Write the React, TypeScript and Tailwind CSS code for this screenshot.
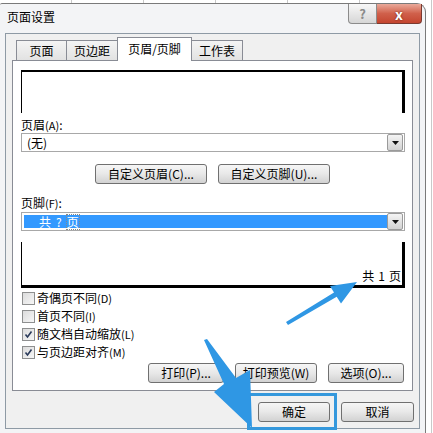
import React from 'react';

const font = "font-['Noto_Sans_CJK_SC',sans-serif]";
const btn =
  'flex items-center justify-center h-[20px] rounded-[3px] border border-[#707070] bg-linear-to-b from-[#f6f6f6] via-[#e8e8e8] to-[#d2d2d2] text-[12px] leading-[14px] text-black';

const Arrow: React.FC = () => (
  <svg width="7" height="4" viewBox="0 0 7 4">
    <path d="M0 0h7L3.5 4z" fill="#111" />
  </svg>
);

const Combo: React.FC<{ children: React.ReactNode }> = ({ children }) => (
  <div className="ml-[8px] flex h-[19px] w-[384px] items-center border border-[#a8a8a8] bg-white pr-px">
    <div className="flex h-full flex-1 items-center pl-[2px]">{children}</div>
    <div className="flex h-[17px] w-[16px] items-center justify-center rounded-[2px] border border-[#9a9a9a] bg-linear-to-b from-[#f4f4f4] to-[#d2d2d2]">
      <Arrow />
    </div>
  </div>
);

const Check: React.FC<{ checked?: boolean; label: string; k: string }> = ({ checked, label, k }) => (
  <div className="ml-[9px] flex h-[18px] items-center gap-[2px]">
    <div className="flex h-[13px] w-[13px] items-center justify-center border border-[#8e8f8f] bg-linear-to-br from-[#dcdcdc] to-[#f6f6f6]">
      {checked && (
        <svg width="9" height="9" viewBox="0 0 9 9">
          <path d="M1.5 4.5l2 2.5 4-5.5" stroke="#2a3a5a" strokeWidth="1.6" fill="none" />
        </svg>
      )}
    </div>
    <span className="text-[12px] leading-[14px] text-black">
      {label}
      <span className="text-[11px]">({k})</span>
    </span>
  </div>
);

export default function App() {
  return (
    <div
      className={`relative h-[433px] w-[433px] overflow-hidden bg-[#e4e4e4] bg-[repeating-linear-gradient(90deg,#ffffff_0_71px,#c9c9c9_71px_72px)] ${font}`}
    >
      {/* dialog */}
      <div className="mt-[3px] h-[440px] w-[426px] rounded-tr-[9px] rounded-tl-[2px] border-t border-r border-[#7a7a7a] bg-[#f3f4f6]">
        {/* title bar */}
        <div className="flex h-[29px] items-start">
          <div className="ml-[7px] mt-[6px] text-[12px] leading-[14px] text-black">页面设置</div>
          <div className="ml-auto mr-[3px] flex">
            <div className="flex h-[20px] w-[29px] items-center justify-center rounded-bl-[4px] border border-t-0 border-[#8b8b8b] bg-linear-to-b from-[#f8f8f8] to-[#d6d6d6] text-[13px] font-bold leading-none text-[#8a8a8a]">
              ?
            </div>
            <div className="flex h-[20px] w-[45px] items-center justify-center rounded-br-[4px] border border-t-0 border-l-0 border-[#7a3a30] bg-linear-to-b from-[#e9a99a] via-[#d0604b] to-[#c4452f] text-[14px] font-bold leading-none text-white [text-shadow:0_0_2px_#5a1a10]">
              x
            </div>
          </div>
        </div>

        {/* client area */}
        <div className="ml-[5px] h-[396px] w-[415px] border border-[#8e9aa5] bg-[#f0f0f0] pl-[6px] pr-[5px] pt-[3px]">
          {/* tabs */}
          <div className="flex h-[23px] items-end pl-[4px] text-[12px] leading-[14px] text-black">
            <div className="flex h-[20px] w-[51px] items-center justify-center border border-b-0 border-[#898c95] bg-linear-to-b from-[#f4f4f4] to-[#e2e2e2]">
              页面
            </div>
            <div className="-ml-px flex h-[20px] w-[52px] items-center justify-center border border-b-0 border-[#898c95] bg-linear-to-b from-[#f4f4f4] to-[#e2e2e2]">
              页边距
            </div>
            <div className="relative z-10 -mb-px -ml-px flex h-[24px] w-[75px] items-start justify-center border border-b-0 border-[#898c95] bg-white pt-[4px]">
              页眉/页脚
            </div>
            <div className="-ml-px flex h-[20px] w-[52px] items-center justify-center border border-b-0 border-[#898c95] bg-linear-to-b from-[#f4f4f4] to-[#e2e2e2]">
              工作表
            </div>
          </div>

          {/* tab panel */}
          <div className="h-[331px] w-[401px] border border-[#898c95] bg-white pt-[9px] text-[12px] leading-[14px] text-black">
            <div className="ml-[8px] h-[43px] w-[384px] border-l border-r-[3px] border-t-2 border-black" />

            <div className="ml-[8px] mt-[5px] h-[14px]">
              页眉<span className="text-[11px]">(A)</span>:
            </div>
            <div className="mt-[1px]">
              <Combo>
                <span className="pl-[3px]">(无)</span>
              </Combo>
            </div>

            <div className="mt-[12px] flex justify-center gap-[11px]">
              <div className={`${btn} w-[112px]`}>自定义页眉(C)...</div>
              <div className={`${btn} w-[112px]`}>自定义页脚(U)...</div>
            </div>

            <div className="ml-[8px] mt-[12px] h-[14px]">
              页脚<span className="text-[11px]">(F)</span>:
            </div>
            <div className="mt-[2px]">
              <Combo>
                <div className="flex h-[13px] flex-1 items-center gap-[5px] bg-[#3399ff] pl-[15px] text-white">
                  <span>共</span>
                  <span>?</span>
                  <span className="outline-dotted outline-1 outline-[#888]">页</span>
                </div>
              </Combo>
            </div>

            <div className="ml-[8px] mt-[11px] flex h-[46px] w-[384px] items-end justify-end gap-[4px] border-b-[3px] border-l border-r-[3px] border-black pb-[2px] pr-[1px]">
              <span>共</span>
              <span>1</span>
              <span>页</span>
            </div>

            <div className="mt-px">
              <Check label="奇偶页不同" k="D" />
              <Check label="首页不同" k="I" />
              <Check checked label="随文档自动缩放" k="L" />
              <Check checked label="与页边距对齐" k="M" />
            </div>

            <div className="mt-[2px] flex justify-end gap-[11px] pr-[8px]">
              <div className={`${btn} w-[76px]`}>打印(P)...</div>
              <div className={`${btn} w-[82px]`}>打印预览(W)</div>
              <div className={`${btn} w-[76px]`}>选项(O)...</div>
            </div>
          </div>

          {/* OK / Cancel */}
          <div className="mt-[11px] flex justify-end gap-[11px]">
            <div className={`${btn} h-[19px] w-[72px] border-[#3c7fb1]`}>确定</div>
            <div className={`${btn} h-[19px] w-[73px]`}>取消</div>
          </div>
        </div>
      </div>

      {/* highlight box */}
      <div className="pointer-events-none absolute left-[247px] top-[393px] h-[37px] w-[90px] border-[3px] border-[#3598dc]" />

      {/* arrows */}
      <svg className="pointer-events-none absolute left-0 top-0" width="433" height="433">
        <polygon
          points="286,322 334,292.4 330,286 357,282 341,303.5 336.7,296.8 288,325"
          fill="#2f97e4"
        />
        <polygon
          points="204,340 224,384 214,392 252,428 250,370 236,378 207,339"
          fill="#2f97e4"
        />
      </svg>
    </div>
  );
}
